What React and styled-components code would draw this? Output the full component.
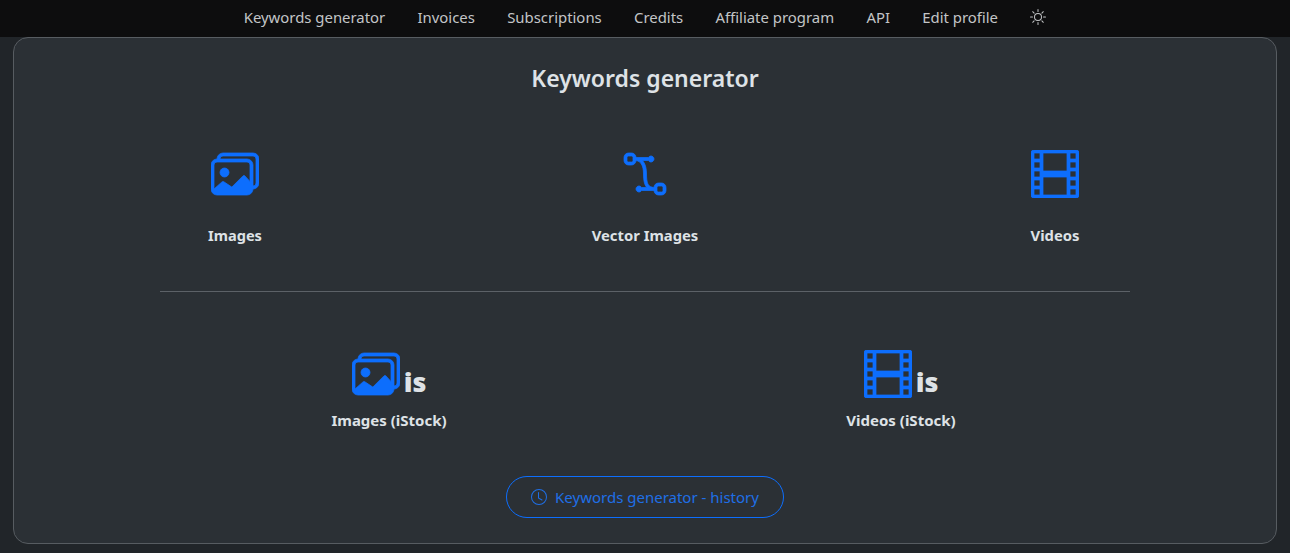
import React from "react";
import styled, { createGlobalStyle } from "styled-components";
import { BsImages, BsBezier2, BsFilm, BsSun, BsClock } from "react-icons/bs";

const GlobalStyle = createGlobalStyle`
  html, body {
    margin: 0;
    padding: 0;
    background: #212529;
    font-family: "Noto Sans", "Open Sans", sans-serif;
  }
  * {
    box-sizing: border-box;
  }
`;

const Page = styled.div`
  width: 1290px;
  height: 553px;
  overflow: hidden;
  display: flex;
  flex-direction: column;
`;

const Navbar = styled.nav`
  height: 37px;
  flex-shrink: 0;
  background: #0d0d0e;
  display: flex;
  justify-content: center;
  align-items: center;
  gap: 32.3px;
  padding-bottom: 3px;
`;

const NavLink = styled.a`
  font-size: 14.9px;
  color: #c3c5c7;
  display: flex;
  align-items: center;
`;

const Card = styled.main`
  margin: 0 13px;
  height: 507px;
  background: #2b3035;
  border: 1px solid #575c61;
  border-radius: 15px;
  display: flex;
  flex-direction: column;
  align-items: center;
  padding-top: 25px;
`;

const Title = styled.h1`
  margin: 0;
  font-size: 23px;
  line-height: 30px;
  font-weight: 600;
  color: #dee2e6;
`;

const TopRow = styled.div`
  width: 970px;
  margin-top: 57px;
  display: flex;
  justify-content: space-between;
  padding-bottom: 46px;
  border-bottom: 1px solid #5c6167;
`;

const BottomRow = styled.div`
  margin-top: 58px;
  display: flex;
  gap: 362px;
`;

const Item = styled.a`
  width: 150px;
  display: flex;
  flex-direction: column;
  align-items: center;
  color: #0d6efd;
`;

const IconRow = styled.div`
  height: 48px;
  display: flex;
  align-items: flex-end;
  gap: 4px;
  font-size: 48px;
  line-height: 0;

  svg {
    stroke: currentColor;
    stroke-width: 0.25;
  }
`;

const Label = styled.span`
  margin-top: ${(props) => props.$gap}px;
  font-size: ${(props) => props.$size}px;
  line-height: 20px;
  font-weight: 700;
  color: #dee2e6;
`;

const Badge = styled.span`
  margin-bottom: 3px;
  font-size: 27px;
  line-height: 27px;
  font-weight: 900;
  color: #dee2e6;
`;

const HistoryButton = styled.a`
  margin-top: 46px;
  width: 278px;
  height: 42px;
  border: 1px solid #0d6efd;
  border-radius: 21px;
  color: #1f6fe6;
  font-size: 15px;
  display: flex;
  justify-content: center;
  align-items: center;
  gap: 8px;
  padding-bottom: 1px;
`;

const App = () => {
  const links = [
    "Keywords generator",
    "Invoices",
    "Subscriptions",
    "Credits",
    "Affiliate program",
    "API",
    "Edit profile",
  ];

  return (
    <Page>
      <GlobalStyle />
      <Navbar>
        {links.map((link) => (
          <NavLink key={link}>{link}</NavLink>
        ))}
        <NavLink>
          <BsSun size={16} />
        </NavLink>
      </Navbar>
      <Card>
        <Title>Keywords generator</Title>
        <TopRow>
          <Item>
            <IconRow>
              <BsImages />
            </IconRow>
            <Label $gap={27} $size={14.6}>Images</Label>
          </Item>
          <Item>
            <IconRow>
              <BsBezier2 />
            </IconRow>
            <Label $gap={27} $size={14.8}>Vector Images</Label>
          </Item>
          <Item>
            <IconRow>
              <BsFilm />
            </IconRow>
            <Label $gap={27} $size={14.8}>Videos</Label>
          </Item>
        </TopRow>
        <BottomRow>
          <Item>
            <IconRow>
              <BsImages />
              <Badge>is</Badge>
            </IconRow>
            <Label $gap={12} $size={15}>Images (iStock)</Label>
          </Item>
          <Item>
            <IconRow>
              <BsFilm />
              <Badge>is</Badge>
            </IconRow>
            <Label $gap={12} $size={15}>Videos (iStock)</Label>
          </Item>
        </BottomRow>
        <HistoryButton>
          <BsClock size={16} />
          Keywords generator - history
        </HistoryButton>
      </Card>
    </Page>
  );
};

export default App;
